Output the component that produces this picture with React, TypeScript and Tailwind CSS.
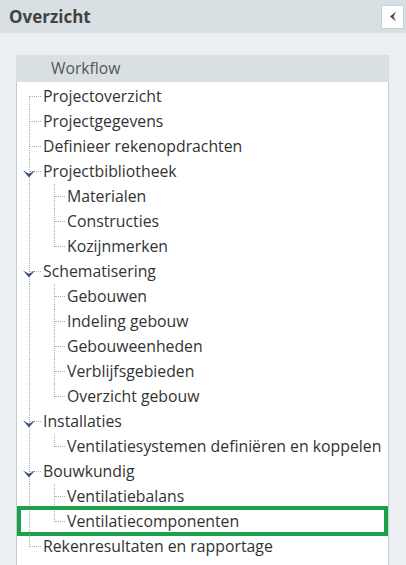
import React from "react";

type Row = {
  label: string;
  level: 1 | 2;
  expanded?: boolean;
  lastChild?: boolean;
  selected?: boolean;
};

const rows: Row[] = [
  { label: "Projectoverzicht", level: 1 },
  { label: "Projectgegevens", level: 1 },
  { label: "Definieer rekenopdrachten", level: 1 },
  { label: "Projectbibliotheek", level: 1, expanded: true },
  { label: "Materialen", level: 2 },
  { label: "Constructies", level: 2 },
  { label: "Kozijnmerken", level: 2, lastChild: true },
  { label: "Schematisering", level: 1, expanded: true },
  { label: "Gebouwen", level: 2 },
  { label: "Indeling gebouw", level: 2 },
  { label: "Gebouweenheden", level: 2 },
  { label: "Verblijfsgebieden", level: 2 },
  { label: "Overzicht gebouw", level: 2, lastChild: true },
  { label: "Installaties", level: 1, expanded: true },
  { label: "Ventilatiesystemen definiëren en koppelen", level: 2, lastChild: true },
  { label: "Bouwkundig", level: 1, expanded: true },
  { label: "Ventilatiebalans", level: 2 },
  { label: "Ventilatiecomponenten", level: 2, lastChild: true, selected: true },
  { label: "Rekenresultaten en rapportage", level: 1 },
];

function Chevron() {
  return (
    <svg width="12" height="8" viewBox="0 0 12 8" className="absolute left-[6px] top-[11px]" aria-hidden>
      <polygon points="0,0.5 6,3.8 12,0.5 6,7.5" fill="#3f5573" />
    </svg>
  );
}

function TreeRow({ row, first, last }: { row: Row; first: boolean; last: boolean }) {
  const dot = "border-[#a9b3b8] border-dotted";
  return (
    <div className="relative flex h-[25px] items-center">
      {/* level 1 vertical */}
      <span
        className={`absolute left-[12px] w-0 border-l ${dot} ${
          first ? "top-[12px] bottom-0" : last ? "top-0 h-[13px]" : "top-0 bottom-0"
        }`}
      />
      {row.level === 1 ? (
        <>
          <span className={`absolute left-[13px] top-[12px] w-[11px] border-t ${dot}`} />
          {row.expanded && <Chevron />}
          <span className="pl-[26px] whitespace-nowrap">{row.label}</span>
        </>
      ) : (
        <>
          <span
            className={`absolute left-[37px] w-0 border-l ${dot} ${
              row.lastChild ? "top-0 h-[13px]" : "top-0 bottom-0"
            }`}
          />
          <span className={`absolute left-[38px] top-[12px] w-[10px] border-t ${dot}`} />
          <span className="pl-[50px] whitespace-nowrap">{row.label}</span>
        </>
      )}
      {row.selected && (
        <span className="pointer-events-none absolute -top-[3px] -bottom-[2px] left-0 right-0 border-[4px] border-[#1ca04a]" />
      )}
    </div>
  );
}

export default function App() {
  return (
    <div
      className="flex h-[565px] w-[406px] flex-col overflow-hidden bg-[#ebeff1] text-[#333]"
      style={{ fontFamily: '"Open Sans", "Noto Sans", sans-serif' }}
    >
      {/* Header */}
      <div className="flex h-[33px] items-center justify-between bg-[#d9e0e3] pl-[9px] pr-[2px]">
        <span className="text-[17px] font-bold text-[#424242]">Overzicht</span>
        <button className="flex h-[24px] w-[23px] items-center justify-center border border-[#c9d1d5] bg-white">
          <svg width="8" height="11" viewBox="0 0 8 11" aria-hidden>
            <polygon points="7,0.5 1,5.5 7,10.5 4.5,5.5" fill="#4a4a4a" />
          </svg>
        </button>
      </div>

      {/* Panel */}
      <div className="ml-[16px] mr-[17px] mt-[22px] flex flex-1 flex-col">
        <div className="flex h-[27px] items-center bg-[#d9e0e3] pl-[35px] text-[15.7px] text-[#555]">
          Workflow
        </div>
        <div className="flex-1 border-l border-r border-[#c3ccd0] bg-white pt-[2px] text-[15.8px]">
          {rows.map((r, i) => (
            <TreeRow key={r.label} row={r} first={i === 0} last={i === rows.length - 1} />
          ))}
        </div>
      </div>
    </div>
  );
}
